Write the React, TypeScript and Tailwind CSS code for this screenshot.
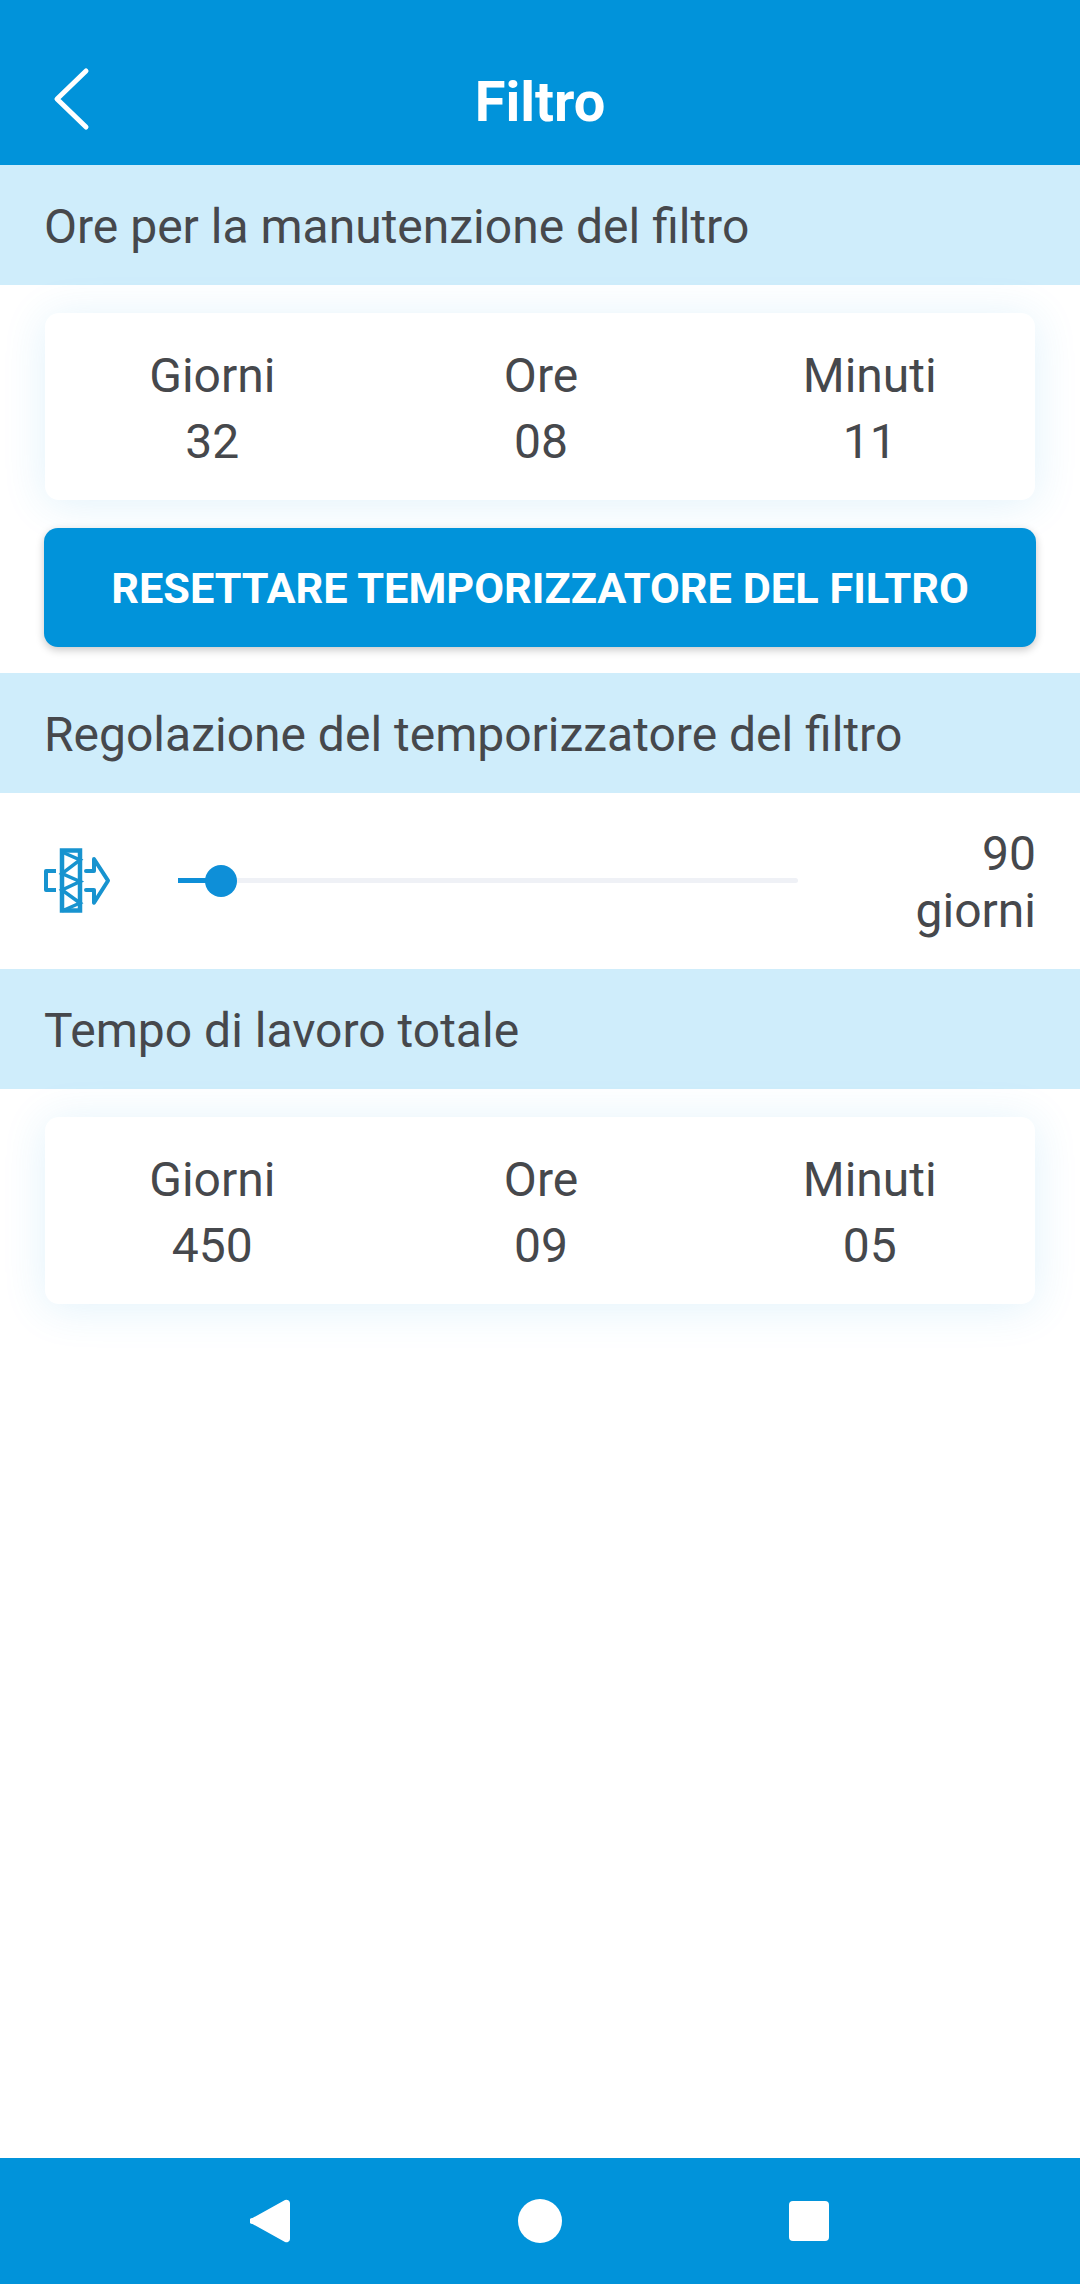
const font = { fontFamily: "Roboto, sans-serif" };

const SectionHeader = ({ title }: { title: string }) => (
  <div className="flex h-[120px] items-center bg-[#cfedfb] pl-[44px] pt-[4px] text-[48px] text-[#46484c]">
    {title}
  </div>
);

const TimeColumn = ({ label, value }: { label: string; value: string }) => (
  <div className="flex flex-1 flex-col items-center">
    <span className="h-[66px] leading-[66px]">{label}</span>
    <span className="h-[66px] leading-[66px]">{value}</span>
  </div>
);

const TimeCard = ({ days, hours, minutes }: { days: string; hours: string; minutes: string }) => (
  <div className="mx-[1px] flex h-[187px] items-center rounded-[14px] bg-white pl-[3px] pr-[1px] pt-[5px] text-[48px] text-[#46484c] shadow-[0_4px_44px_rgba(40,160,230,0.14)]">
    <TimeColumn label="Giorni" value={days} />
    <TimeColumn label="Ore" value={hours} />
    <TimeColumn label="Minuti" value={minutes} />
  </div>
);

const FilterIcon = () => (
  <svg width="68" height="68" viewBox="0 0 68 68" fill="none" stroke="#1793cf" strokeWidth="4">
    <rect x="19" y="3.5" width="18" height="60" strokeWidth="4.5" />
    <path d="M19 5 37 13 19 26.5 37 34.5 19 43 37 56 19 64" strokeWidth="3.5" />
    <path d="M13 24H3V43H13" strokeLinejoin="round" />
    <path d="M43 24H51V12L65 33.7 51 55.7V43H43" strokeLinejoin="round" strokeLinecap="round" />
  </svg>
);

export default function App() {
  return (
    <div className="flex h-[2284px] w-[1080px] flex-col overflow-hidden bg-white" style={font}>
      <header className="relative flex h-[165px] items-center justify-center bg-[#0193da] pt-[38px]">
        <svg
          className="absolute left-[50px] top-[65px]"
          width="42"
          height="68"
          viewBox="0 0 42 68"
          fill="none"
          stroke="white"
          strokeWidth="5"
          strokeLinecap="round"
          strokeLinejoin="round"
        >
          <path d="M36 6 7 34 36 62" />
        </svg>
        <h1 className="text-[56px] font-bold text-white">Filtro</h1>
      </header>

      <SectionHeader title="Ore per la manutenzione del filtro" />
      <div className="flex flex-col gap-[28px] px-[44px] pb-[26px] pt-[28px]">
        <TimeCard days="32" hours="08" minutes="11" />
        <button className="h-[119px] rounded-[14px] bg-[#0193da] pt-[3px] text-[43.3px] font-bold text-white shadow-[0_3px_8px_rgba(0,0,0,0.22)]">
          RESETTARE TEMPORIZZATORE DEL FILTRO
        </button>
      </div>

      <SectionHeader title="Regolazione del temporizzatore del filtro" />
      <div className="flex h-[176px] items-center pl-[43px] pr-[44px]">
        <FilterIcon />
        <div className="relative bottom-[1px] ml-[67px] h-[5px] w-[620px] rounded-full bg-[#eff1f6]">
          <div className="absolute left-0 top-0 h-[5px] w-[42px] bg-[#0e8fd8]" />
          <div className="absolute left-[27px] top-[-13px] h-[32px] w-[32px] rounded-full bg-[#0e8fd8]" />
        </div>
        <div className="ml-auto pt-[2px] text-right text-[48px] leading-[57px] text-[#46484c]">
          <div>90</div>
          <div>giorni</div>
        </div>
      </div>

      <SectionHeader title="Tempo di lavoro totale" />
      <div className="px-[44px] pt-[28px]">
        <TimeCard days="450" hours="09" minutes="05" />
      </div>

      <nav className="mt-auto flex h-[126px] items-center justify-between bg-[#0193da] pl-[250px] pr-[251px]">
        <svg width="40" height="44" viewBox="0 0 40 44" fill="white">
          <path d="M35 1 2.5 19a3 3 0 0 0 0 6L35 43a3.5 3.5 0 0 0 5-3V4a3.5 3.5 0 0 0-5-3Z" />
        </svg>
        <div className="h-[44px] w-[44px] rounded-full bg-white" />
        <div className="h-[40px] w-[40px] rounded-[4px] bg-white" />
      </nav>
    </div>
  );
}
